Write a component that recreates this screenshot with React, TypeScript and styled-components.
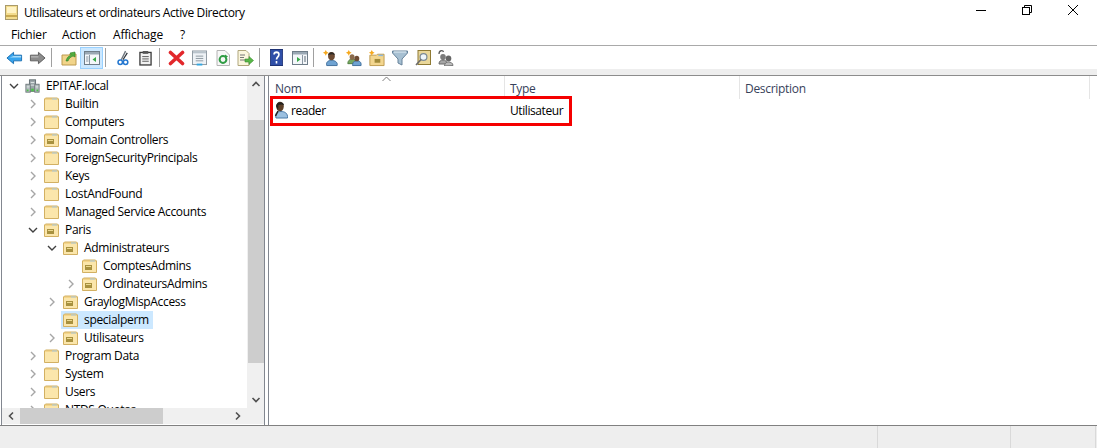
import React from 'react';
import styled, { createGlobalStyle } from 'styled-components';

const GlobalStyle = createGlobalStyle`
  html, body {
    margin: 0;
    padding: 0;
    background: #fff;
    overflow: hidden;
  }
  body {
    font-family: "Open Sans", "Noto Sans", sans-serif;
    font-size: 12px;
    color: #000;
  }
`;

const Window = styled.div`
  width: 1097px;
  height: 448px;
  display: flex;
  flex-direction: column;
  overflow: hidden;
  background: #fff;
`;

const TitleBar = styled.div`
  height: 24px;
  display: flex;
  align-items: center;
  padding-left: 5px;
  flex-shrink: 0;
`;

const TitleText = styled.div`
  margin-left: 6px;
  font-size: 12px;
  letter-spacing: -0.38px;
  color: #000;
`;

const WindowControls = styled.div`
  margin-left: auto;
  margin-right: 1px;
  margin-bottom: 4px;
  display: flex;
`;

const WinButton = styled.div`
  width: 46px;
  height: 20px;
  display: flex;
  align-items: center;
  justify-content: center;
`;

const MenuBar = styled.div`
  height: 21px;
  display: flex;
  align-items: center;
  padding-left: 11px;
  flex-shrink: 0;
  border-bottom: 1px solid #a9a9a9;
`;

const MenuItem = styled.div<{ $width: number }>`
  width: ${({ $width }) => $width}px;
  font-size: 12px;
  letter-spacing: -0.2px;
`;

const Toolbar = styled.div`
  height: 23px;
  display: flex;
  align-items: center;
  padding-left: 3px;
  flex-shrink: 0;
`;

const ToolButton = styled.div<{ $active?: boolean }>`
  width: 23px;
  height: 22px;
  box-sizing: border-box;
  display: flex;
  align-items: center;
  justify-content: center;
  flex-shrink: 0;
  background: ${({ $active }) => ($active ? '#cce8ff' : 'transparent')};
  border: 1px solid ${({ $active }) => ($active ? '#99d1ff' : 'transparent')};
`;

const ToolSep = styled.div`
  width: 1px;
  height: 19px;
  background: #a0a0a0;
  margin: 0 5px 0 2px;
  flex-shrink: 0;
`;

const Band = styled.div`
  height: 6px;
  background: #eeeeee;
  border-bottom: 1px solid #8c8c8c;
  flex-shrink: 0;
`;

const Body = styled.div`
  height: 349px;
  display: flex;
  padding-left: 1px;
  flex-shrink: 0;
`;

const TreePane = styled.div`
  width: 262px;
  display: grid;
  grid-template-columns: 245px 17px;
  grid-template-rows: 332px 16px;
  border-left: 1px solid #828790;
  border-right: 1px solid #828790;
  flex-shrink: 0;
`;

const TreeList = styled.div`
  overflow: hidden;
  padding-top: 1px;
`;

const TreeRow = styled.div<{ $depth: number }>`
  height: 18px;
  display: flex;
  align-items: center;
  padding-left: ${({ $depth }) => 5 + $depth * 19}px;
`;

const Twisty = styled.div`
  width: 13px;
  height: 18px;
  display: flex;
  align-items: center;
  justify-content: center;
  flex-shrink: 0;
`;

const NodeBody = styled.div<{ $selected?: boolean }>`
  display: flex;
  align-items: center;
  height: 18px;
  margin-left: 3px;
  padding: 0 4px 0 2px;
  background: ${({ $selected }) => ($selected ? '#cce8ff' : 'transparent')};
`;

const NodeIcon = styled.div`
  width: 15px;
  height: 18px;
  display: flex;
  align-items: center;
  justify-content: center;
  flex-shrink: 0;
`;

const NodeLabel = styled.div`
  line-height: 18px;
  margin-left: 6px;
  white-space: nowrap;
  letter-spacing: -0.33px;
`;

const VScroll = styled.div`
  background: #f0f0f0;
  display: flex;
  flex-direction: column;
  align-items: center;
`;

const ScrollArrow = styled.div`
  width: 16px;
  height: 16px;
  display: flex;
  align-items: center;
  justify-content: center;
  flex-shrink: 0;
`;

const VThumbGap = styled.div`
  height: 28px;
`;

const VThumb = styled.div`
  width: 16px;
  height: 243px;
  background: #cdcdcd;
`;

const VRest = styled.div`
  flex: 1;
`;

const HScroll = styled.div`
  background: #f0f0f0;
  display: flex;
  align-items: center;
  padding: 0 1px 0 1px;
`;

const HThumb = styled.div`
  width: 143px;
  height: 16px;
  margin-left: 1px;
  background: #cdcdcd;
`;

const HRest = styled.div`
  flex: 1;
`;

const Corner = styled.div`
  background: #f0f0f0;
`;

const ListPane = styled.div`
  margin-left: 3px;
  flex: 1;
  border-left: 1px solid #828790;
  position: relative;
`;

const ListHeader = styled.div`
  height: 23px;
  display: flex;
  position: relative;
`;

const HeaderCell = styled.div<{ $width: number; $pad: number }>`
  width: ${({ $width }) => $width}px;
  box-sizing: border-box;
  border-right: 1px solid #e5e5e5;
  padding: 4px 0 0 ${({ $pad }) => $pad}px;
  line-height: 18px;
  color: #37415a;
  letter-spacing: -0.3px;
`;

const SortCaret = styled.div`
  position: absolute;
  left: 113px;
  top: 0;
  width: 9px;
  height: 6px;
  display: flex;
`;

const ListRow = styled.div`
  height: 22px;
  display: flex;
  align-items: center;
`;

const RowName = styled.div`
  width: 236px;
  display: flex;
  align-items: center;
  padding-left: 5px;
  box-sizing: border-box;
  letter-spacing: -0.45px;
`;

const RowType = styled.div`
  padding-left: 5px;
  letter-spacing: -0.42px;
`;

const RowText = styled.span`
  margin-left: 3px;
`;

const Highlight = styled.div`
  position: absolute;
  left: 1px;
  top: 20px;
  width: 302px;
  height: 30px;
  box-sizing: border-box;
  border: 3px solid #f50000;
  pointer-events: none;
`;

const StatusBar = styled.div`
  flex: 1;
  background: #eeeeee;
  border-top: 1px solid #808080;
  display: flex;
`;

const StatusCell = styled.div<{ $width: number }>`
  width: ${({ $width }) => $width}px;
  box-sizing: border-box;
  border-right: 1px solid #d9d9d9;
  flex-shrink: 0;
`;

const Chevron = ({ open }: { open?: boolean }) => (
  <svg width="10" height="10" viewBox="0 0 10 10" fill="none">
    <path
      d={open ? 'M1 3 L5 7 L9 3' : 'M3 1 L7 5 L3 9'}
      stroke={open ? '#404040' : '#a6a6a6'}
      strokeWidth="1.4"
    />
  </svg>
);

const Folder = ({ ou }: { ou?: boolean }) => (
  <svg width="15" height="14" viewBox="0 0 15 14">
    <path d="M0.5 13.5 V2 L1.5 1 H13.5 L14.5 2 V13.5 Z" fill="#f4d58a" stroke="#d2b062" />
    <rect x="1" y="3" width="13" height="10" fill="#fbe6ab" />
    <rect x="8" y="1.5" width="5" height="1" fill="#a7cbe6" />
    {ou && <rect x="3" y="6" width="7" height="5" fill="#a8913f" />}
    {ou && <rect x="4" y="7" width="5" height="1" fill="#ecd98f" />}
  </svg>
);

const Domain = () => (
  <svg width="17" height="16" viewBox="0 0 17 16">
    <rect x="5" y="1" width="7" height="13" fill="#9aa5a8" stroke="#5f6a6e" />
    <rect x="1" y="6" width="5" height="9" fill="#b4bdbf" stroke="#6c7679" />
    <rect x="11" y="6" width="5" height="9" fill="#b4bdbf" stroke="#6c7679" />
    <path d="M6.5 4 H10.5 M6.5 7 H10.5 M2 9 H5 M12 9 H15" stroke="#e6ecec" />
    <rect x="7" y="11" width="3" height="3" fill="#4cc04a" />
    <rect x="2" y="12" width="2" height="2" fill="#4cc04a" />
    <rect x="13" y="12" width="2" height="2" fill="#4cc04a" />
  </svg>
);

const Person = () => (
  <svg width="14" height="18" viewBox="0 0 14 18">
    <path d="M2 17 C0.5 12 3.5 10.5 7 10.5 C10.5 10.5 14 12 13.5 17 Z" fill="#9cc0e0" stroke="#4b7aa8" />
    <ellipse cx="6" cy="5.5" rx="3.8" ry="4.8" fill="#5d4029" />
    <path d="M2 5 C2.5 0 10 0 10 4.5 L8 3.5 L4.5 4 L4 9 Z" fill="#24211e" />
    <path d="M4 10 L1.5 15" stroke="#24211e" strokeWidth="1.6" />
  </svg>
);

const Star = ({ x, y }: { x: number; y: number }) => (
  <path
    d={`M${x} ${y - 3} L${x + 1} ${y - 1} L${x + 3} ${y} L${x + 1} ${y + 1} L${x} ${y + 3} L${x - 1} ${y + 1} L${x - 3} ${y} L${x - 1} ${y - 1} Z`}
    fill="#f6a81c"
  />
);

const IconBack = () => (
  <svg width="17" height="14" viewBox="0 0 18 14">
    <path d="M1 7 L8 1 V4 H16.5 V10 H8 V13 Z" fill="#36a4ee" stroke="#1c6fb0" />
    <path d="M8 5 H16 V6.5 H4 Z" fill="#a6dcfa" />
  </svg>
);

const IconForward = () => (
  <svg width="17" height="14" viewBox="0 0 18 14">
    <path d="M17 7 L10 1 V4 H1.5 V10 H10 V13 Z" fill="#8c8c8c" stroke="#5c5c5c" />
    <path d="M2 5 H10 V6.5 H2 Z" fill="#b5b5b5" />
  </svg>
);

const IconUp = () => (
  <svg width="16" height="16" viewBox="0 0 16 16">
    <path d="M1 5 H8 L9 4 H15 V15 H1 Z" fill="#f1d48a" stroke="#bd9a4e" />
    <path d="M5 11 C6 7 8 6 10 5 L9 3 L14 2 L14 7 L12 6 C10 7 8 8 7 11 Z" fill="#52ad3e" stroke="#2e7f26" strokeWidth="0.6" />
  </svg>
);

const IconPane = () => (
  <svg width="16" height="14" viewBox="0 0 16 14">
    <rect x="0.5" y="0.5" width="15" height="13" fill="#f4f7fa" stroke="#6f7d89" />
    <rect x="1" y="1" width="14" height="2.5" fill="#9aa8b4" />
    <path d="M5.5 4 V13" stroke="#8a97a3" />
    <path d="M2 6 H4.5 M2 8 H4.5 M2 10 H4.5" stroke="#8a97a3" />
    <path d="M12 6 L8.5 8.5 L12 11 Z" fill="#35a945" />
  </svg>
);

const IconCut = () => (
  <svg width="12" height="18" viewBox="0 0 14 18">
    <path d="M10 1 L5 11" stroke="#6f7780" strokeWidth="1.6" />
    <path d="M12 3 L7 11" stroke="#2b3138" strokeWidth="1.4" />
    <circle cx="3.8" cy="14" r="2.6" fill="none" stroke="#2477d0" strokeWidth="1.8" />
    <circle cx="10" cy="14" r="2.6" fill="none" stroke="#2477d0" strokeWidth="1.8" />
  </svg>
);

const IconPaste = () => (
  <svg width="13" height="16" viewBox="0 0 14 16">
    <rect x="1" y="2" width="12" height="13.5" fill="#f2f2f2" stroke="#3a3a3a" strokeWidth="1.4" />
    <rect x="4" y="0.5" width="6" height="3" fill="#555" />
    <path d="M3.5 6.5 H10.5 M3.5 9 H10.5 M3.5 11.5 H10.5" stroke="#555" />
  </svg>
);

const IconDelete = () => (
  <svg width="17" height="16" viewBox="0 0 17 16">
    <path d="M2.5 2.5 L14.5 13.5 M14.5 2.5 L2.5 13.5" stroke="#e2272b" strokeWidth="3.6" strokeLinecap="round" />
  </svg>
);

const IconProps = () => (
  <svg width="15" height="16" viewBox="0 0 16 16">
    <rect x="0.5" y="0.5" width="15" height="14.5" fill="#eef2f6" stroke="#8b969f" />
    <rect x="1" y="1" width="14" height="2" fill="#b9c3cb" />
    <path d="M4 6 H12 M4 8.5 H12 M4 11 H12" stroke="#8b969f" />
    <rect x="5" y="14" width="6" height="2" fill="#33a6e0" />
  </svg>
);

const IconRefresh = () => (
  <svg width="14" height="16" viewBox="0 0 14 16">
    <path d="M1 0.5 H9 L13.5 5 V15.5 H1 Z" fill="#f7f7f7" stroke="#b4b4b4" />
    <circle cx="7" cy="9.5" r="3.4" fill="none" stroke="#2f9c44" strokeWidth="2" />
    <path d="M9 4.5 L12 6.5 L9 8.5 Z" fill="#2f9c44" />
  </svg>
);

const IconExport = () => (
  <svg width="17" height="16" viewBox="0 0 17 16">
    <path d="M1 0.5 H9 L12 3.5 V15.5 H1 Z" fill="#fbf6de" stroke="#b0a67c" />
    <path d="M3 5 H8 M3 7.5 H7 M3 10 H8" stroke="#777" />
    <path d="M8 9 H12 V6.5 L16.5 10.5 L12 14.5 V12 H8 Z" fill="#58b848" stroke="#3a8a30" strokeWidth="0.6" />
  </svg>
);

const IconHelp = () => (
  <svg width="13" height="17" viewBox="0 0 16 17" preserveAspectRatio="none">
    <rect x="0.5" y="0.5" width="15" height="16" fill="#2f4fa8" stroke="#1e3274" />
    <path d="M5 5.5 C5 2.5 11 2.5 11 5.5 C11 8 8 8 8 10.5" fill="none" stroke="#fff" strokeWidth="2" />
    <rect x="7" y="12" width="2" height="2.5" fill="#fff" />
  </svg>
);

const IconConsole = () => (
  <svg width="16" height="14" viewBox="0 0 16 14">
    <rect x="0.5" y="0.5" width="15" height="13" fill="#f4f7fa" stroke="#6f7d89" />
    <rect x="1" y="1" width="14" height="2.5" fill="#9aa8b4" />
    <path d="M10.5 4 V13" stroke="#8a97a3" />
    <path d="M12 6 H14 M12 8 H14 M12 10 H14" stroke="#5c6a76" />
    <path d="M5 6 L8.5 8.5 L5 11 Z" fill="#35a945" />
  </svg>
);

const IconNewUser = () => (
  <svg width="17" height="18" viewBox="0 0 18 18">
    <path d="M5 17 C4 13 7 11.5 10 11.5 C13 11.5 17 13 16 17 Z" fill="#6fa3d2" stroke="#3f6c99" />
    <ellipse cx="10" cy="7" rx="3.6" ry="4.4" fill="#6d4b33" />
    <path d="M6.5 6 C7 2 13 2 13.5 6 L11 5 L7.5 5.5 Z" fill="#2e2a26" />
    <Star x={4} y={3.5} />
  </svg>
);

const IconNewGroup = () => (
  <svg width="17" height="18" viewBox="0 0 18 18">
    <path d="M3 15 C3 11 6 10 8 10 C10 10 12 11 12 15 Z" fill="#77a860" stroke="#4d7a3d" />
    <ellipse cx="7.5" cy="8" rx="2.6" ry="3" fill="#8a6b4d" />
    <path d="M8 17 C8 13 10 12 13 12 C15 12 17.5 13 17 17 Z" fill="#6fa3d2" stroke="#3f6c99" />
    <ellipse cx="12.5" cy="9.5" rx="2.6" ry="3" fill="#6d4b33" />
    <Star x={4} y={3.5} />
  </svg>
);

const IconNewOu = () => (
  <svg width="17" height="18" viewBox="0 0 18 18">
    <path d="M2 6 H9 L10 5 H17 V17 H2 Z" fill="#f3d68f" stroke="#bd9a4e" />
    <rect x="11" y="5.5" width="5" height="1.5" fill="#8db8dc" />
    <rect x="7" y="10" width="6" height="4" fill="#a18a3a" />
    <Star x={4} y={3.5} />
  </svg>
);

const IconFilter = () => (
  <svg width="16" height="16" viewBox="0 0 16 16">
    <path d="M0.5 1 H15.5 V3 L10 9 V15 L6 13 V9 L0.5 3 Z" fill="#a7c0d2" stroke="#66829a" />
    <path d="M2 2 H14" stroke="#e4eef5" />
  </svg>
);

const IconFind = () => (
  <svg width="16" height="16" viewBox="0 0 16 16">
    <rect x="3" y="0.5" width="12.5" height="14" fill="#e9d79a" stroke="#8f7a34" />
    <circle cx="8.5" cy="7" r="3.4" fill="#eef6fb" stroke="#7c8a94" strokeWidth="1.2" />
    <path d="M6 9.5 L1 15" stroke="#6c6c6c" strokeWidth="1.6" />
  </svg>
);

const IconDelegate = () => (
  <svg width="17" height="17" viewBox="0 0 17 17">
    <path d="M2 5 C2 1 6 1 6.5 3" fill="none" stroke="#5f5f5f" strokeWidth="1.3" />
    <ellipse cx="6" cy="8" rx="2.8" ry="3" fill="#7c7c7c" />
    <path d="M2 15 C2 12 4 11 6 11 C8 11 10 12 10 15 Z" fill="#a5a5a5" stroke="#6b6b6b" />
    <ellipse cx="11.5" cy="9.5" rx="2.8" ry="3" fill="#666" />
    <path d="M7.5 17 C7.5 14 9.5 13 11.5 13 C13.5 13 16 14 16 16.5 Z" fill="#bbb" stroke="#777" />
  </svg>
);

const nodes = [
  { label: 'Builtin', depth: 1 },
  { label: 'Computers', depth: 1 },
  { label: 'Domain Controllers', depth: 1, ou: true },
  { label: 'ForeignSecurityPrincipals', depth: 1 },
  { label: 'Keys', depth: 1 },
  { label: 'LostAndFound', depth: 1 },
  { label: 'Managed Service Accounts', depth: 1 },
  { label: 'Paris', depth: 1, ou: true, open: true },
  { label: 'Administrateurs', depth: 2, ou: true, open: true },
  { label: 'ComptesAdmins', depth: 3, ou: true, leaf: true },
  { label: 'OrdinateursAdmins', depth: 3, ou: true },
  { label: 'GraylogMispAccess', depth: 2, ou: true },
  { label: 'specialperm', depth: 2, ou: true, leaf: true, selected: true },
  { label: 'Utilisateurs', depth: 2, ou: true },
  { label: 'Program Data', depth: 1 },
  { label: 'System', depth: 1 },
  { label: 'Users', depth: 1 },
  { label: 'NTDS Quotas', depth: 1 },
];

export default function App() {
  return (
    <Window>
      <GlobalStyle />
      <TitleBar>
        <svg width="13" height="15" viewBox="0 0 13 15">
          <rect x="0.5" y="0.5" width="12" height="14" fill="#f3dc8d" stroke="#a99a6a" />
          <rect x="2" y="2" width="9" height="6" fill="#fff3c4" />
          <rect x="1" y="10" width="11" height="2" fill="#c9a94f" />
        </svg>
        <TitleText>Utilisateurs et ordinateurs Active Directory</TitleText>
        <WindowControls>
          <WinButton>
            <svg width="10" height="10" viewBox="0 0 10 10"><path d="M0 5.5 H10" stroke="#000" /></svg>
          </WinButton>
          <WinButton>
            <svg width="10" height="10" viewBox="0 0 10 10" fill="none">
              <rect x="0.5" y="2.5" width="7" height="7" stroke="#000" />
              <path d="M2.5 2.5 V0.5 H9.5 V7.5 H7.5" stroke="#000" />
            </svg>
          </WinButton>
          <WinButton>
            <svg width="10" height="10" viewBox="0 0 10 10"><path d="M0 0 L10 10 M10 0 L0 10" stroke="#000" /></svg>
          </WinButton>
        </WindowControls>
      </TitleBar>
      <MenuBar>
        <MenuItem $width={51}>Fichier</MenuItem>
        <MenuItem $width={51}>Action</MenuItem>
        <MenuItem $width={67}>Affichage</MenuItem>
        <MenuItem $width={12}>?</MenuItem>
      </MenuBar>
      <Toolbar>
        <ToolButton><IconBack /></ToolButton>
        <ToolButton><IconForward /></ToolButton>
        <ToolSep />
        <ToolButton><IconUp /></ToolButton>
        <ToolButton $active><IconPane /></ToolButton>
        <ToolSep />
        <ToolButton><IconCut /></ToolButton>
        <ToolButton><IconPaste /></ToolButton>
        <ToolSep />
        <ToolButton><IconDelete /></ToolButton>
        <ToolButton><IconProps /></ToolButton>
        <ToolButton><IconRefresh /></ToolButton>
        <ToolButton><IconExport /></ToolButton>
        <ToolSep />
        <ToolButton><IconHelp /></ToolButton>
        <ToolButton><IconConsole /></ToolButton>
        <ToolSep />
        <ToolButton><IconNewUser /></ToolButton>
        <ToolButton><IconNewGroup /></ToolButton>
        <ToolButton><IconNewOu /></ToolButton>
        <ToolButton><IconFilter /></ToolButton>
        <ToolButton><IconFind /></ToolButton>
        <ToolButton><IconDelegate /></ToolButton>
      </Toolbar>
      <Band />
      <Body>
        <TreePane>
          <TreeList>
            <TreeRow $depth={0}>
              <Twisty><Chevron open /></Twisty>
              <NodeBody>
                <NodeIcon><Domain /></NodeIcon>
                <NodeLabel>EPITAF.local</NodeLabel>
              </NodeBody>
            </TreeRow>
            {nodes.map((node) => (
              <TreeRow key={node.label} $depth={node.depth}>
                <Twisty>{!node.leaf && <Chevron open={node.open} />}</Twisty>
                <NodeBody $selected={node.selected}>
                  <NodeIcon><Folder ou={node.ou} /></NodeIcon>
                  <NodeLabel>{node.label}</NodeLabel>
                </NodeBody>
              </TreeRow>
            ))}
          </TreeList>
          <VScroll>
            <ScrollArrow>
              <svg width="10" height="10" viewBox="0 0 10 10" fill="none"><path d="M1.5 7 L5 3.5 L8.5 7" stroke="#505050" strokeWidth="1.6" /></svg>
            </ScrollArrow>
            <VThumbGap />
            <VThumb />
            <VRest />
            <ScrollArrow>
              <svg width="10" height="10" viewBox="0 0 10 10" fill="none"><path d="M1.5 3 L5 6.5 L8.5 3" stroke="#505050" strokeWidth="1.6" /></svg>
            </ScrollArrow>
          </VScroll>
          <HScroll>
            <ScrollArrow>
              <svg width="10" height="10" viewBox="0 0 10 10" fill="none"><path d="M7 1.5 L3.5 5 L7 8.5" stroke="#505050" strokeWidth="1.6" /></svg>
            </ScrollArrow>
            <HThumb />
            <HRest />
            <ScrollArrow>
              <svg width="10" height="10" viewBox="0 0 10 10" fill="none"><path d="M3 1.5 L6.5 5 L3 8.5" stroke="#505050" strokeWidth="1.6" /></svg>
            </ScrollArrow>
          </HScroll>
          <Corner />
        </TreePane>
        <ListPane>
          <ListHeader>
            <HeaderCell $width={236} $pad={6}>Nom</HeaderCell>
            <HeaderCell $width={235} $pad={5}>Type</HeaderCell>
            <HeaderCell $width={350} $pad={5}>Description</HeaderCell>
            <SortCaret>
              <svg width="9" height="6" viewBox="0 0 9 6" fill="none"><path d="M0.5 5 L4.5 1 L8.5 5" stroke="#7d7d7d" /></svg>
            </SortCaret>
          </ListHeader>
          <ListRow>
            <RowName>
              <Person />
              <RowText>reader</RowText>
            </RowName>
            <RowType>Utilisateur</RowType>
          </ListRow>
          <Highlight />
        </ListPane>
      </Body>
      <StatusBar>
        <StatusCell $width={878} />
        <StatusCell $width={133} />
        <StatusCell $width={85} />
      </StatusBar>
    </Window>
  );
}
